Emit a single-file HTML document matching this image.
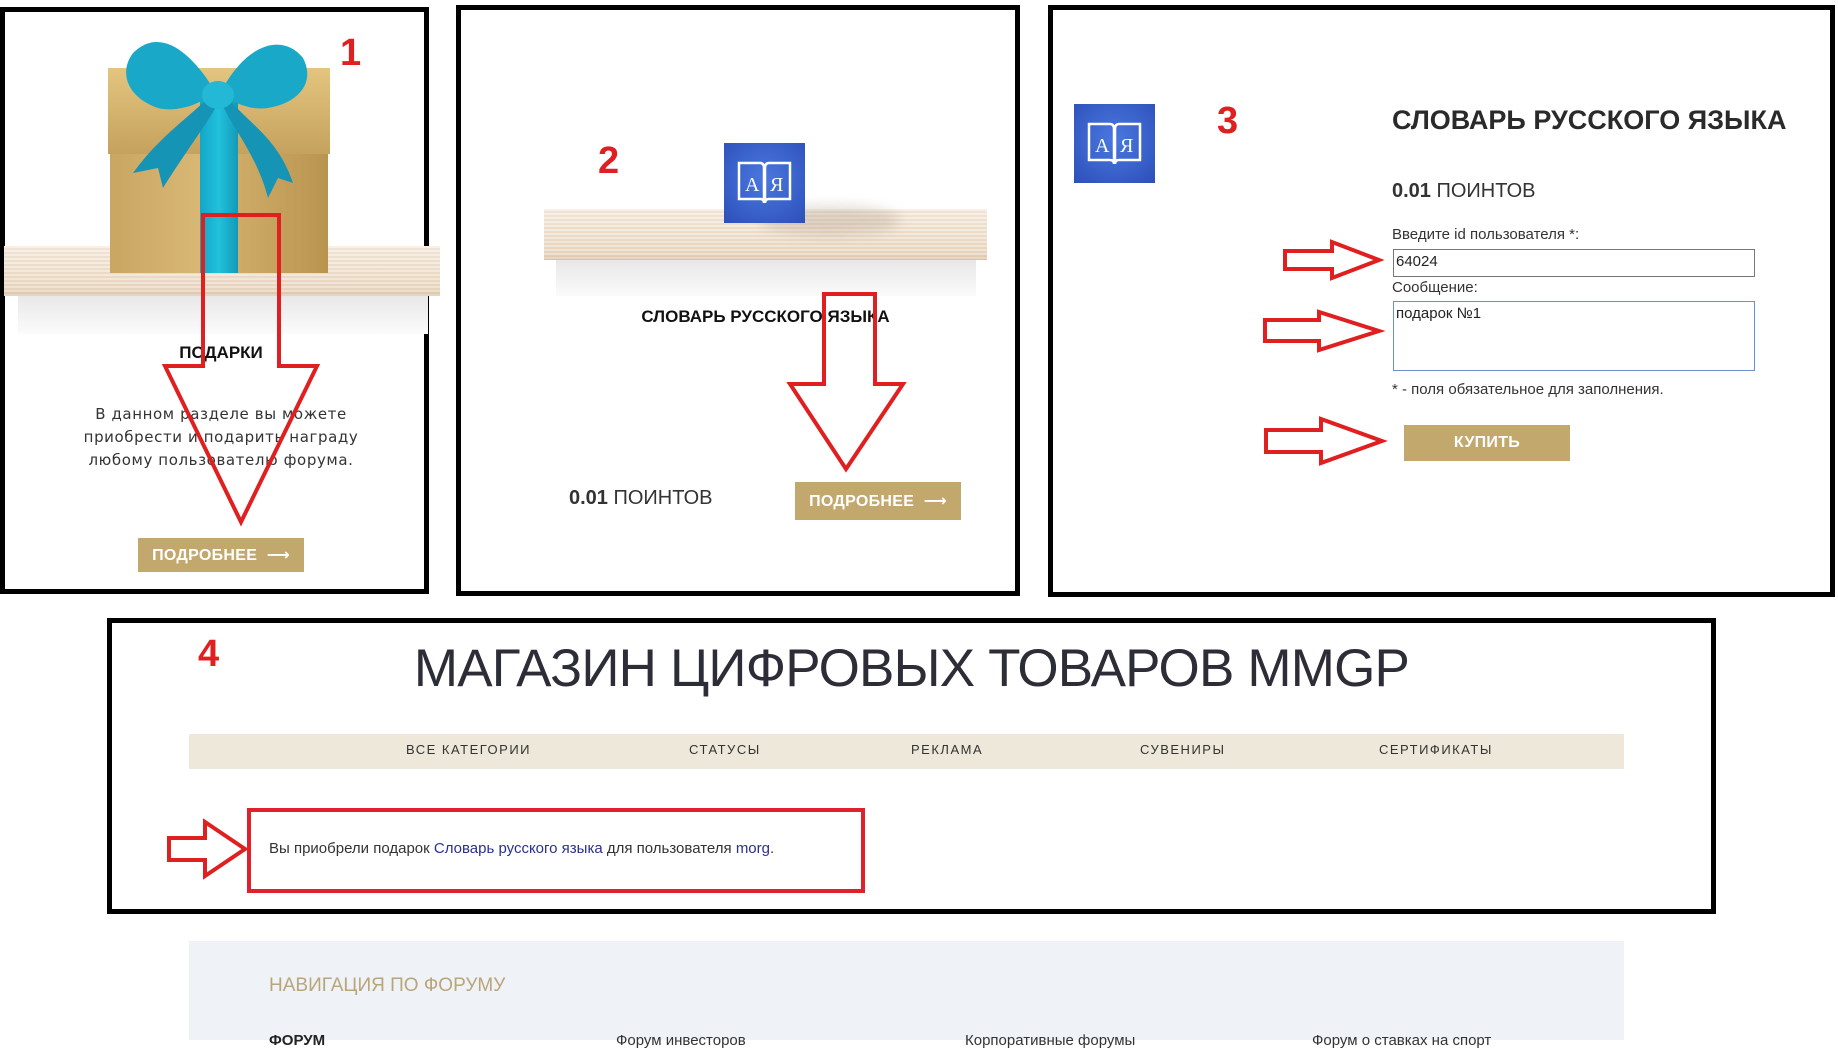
<!DOCTYPE html>
<html><head><meta charset="utf-8"><style>
*{margin:0;padding:0;box-sizing:border-box}
body{width:1838px;height:1040px;background:#fff;position:relative;overflow:hidden;font-family:"Liberation Sans","DejaVu Sans",sans-serif;color:#222}
.a{position:absolute}
.box{position:absolute;border:5px solid #000}
.btn{position:absolute;background:#c2a86c;color:#fff;font-weight:bold;font-size:16px;display:flex;align-items:center;justify-content:center;letter-spacing:.3px}
.num{position:absolute;color:#e02020;font-weight:bold;font-size:38px;font-family:"Liberation Sans",sans-serif}
.shelf{position:absolute;background:repeating-linear-gradient(180deg,rgba(255,255,255,.25) 0 2px,rgba(200,170,140,.12) 2px 4px),linear-gradient(180deg,#f6ece0 0%,#f0e2d0 50%,#ead8c3 88%,#d9c4a8 100%)}
.shadow{position:absolute;background:linear-gradient(180deg,#e6e6e6,#fbfbfb)}
.icon{position:absolute;background:radial-gradient(circle at 50% 45%,#4a78e0,#2c50b8);}
.pts{position:absolute;font-size:20px;color:#333}
.pts b{font-weight:bold}
.nav span{position:absolute;top:742px;font-size:13px;letter-spacing:1.5px;color:#333}
</style></head><body>

<!-- Box 1 -->
<div class="box" style="left:0;top:7px;width:429px;height:587px"></div>
<div class="shadow" style="left:18px;top:292px;width:410px;height:42px"></div>
<div class="shelf" style="left:4px;top:246px;width:436px;height:50px"></div>
<div class="a" style="left:110px;top:153px;width:218px;height:120px;background:linear-gradient(90deg,#c9a763,#d8b673 40%,#b8944f)"></div>
<div class="a" style="left:108px;top:68px;width:222px;height:86px;background:linear-gradient(180deg,#e3c57f,#d1b06c 60%,#c5a25e)"></div>
<div class="a" style="left:200px;top:100px;width:38px;height:173px;background:linear-gradient(90deg,#13a7c8,#22c0dc 50%,#139ab8)"></div>
<svg class="a" style="left:118px;top:28px" width="200" height="170" viewBox="0 0 200 170">
<path d="M95 60 C70 20 40 0 15 25 C0 45 10 70 40 80 C60 85 85 75 95 65Z" fill="#1aa8c9"/>
<path d="M105 60 C130 15 165 5 185 30 C198 55 180 75 150 80 C130 83 110 72 105 65Z" fill="#1aa8c9"/>
<path d="M90 70 C70 90 40 110 15 145 L40 140 L45 160 C70 120 90 95 100 75Z" fill="#1594b6"/>
<path d="M110 70 C130 95 160 110 175 155 L160 150 L150 170 C140 130 115 100 105 78Z" fill="#1594b6"/>
<ellipse cx="100" cy="67" rx="16" ry="14" fill="#22b8d6"/>
</svg>
<div class="num" style="left:340px;top:32px">1</div>
<div class="a" style="left:0;width:442px;top:343px;text-align:center;font-weight:bold;font-size:17px;color:#111">ПОДАРКИ</div>
<div class="a" style="left:0;width:442px;top:403px;text-align:center;font-size:15px;line-height:23px;color:#333;letter-spacing:.6px;font-family:'DejaVu Sans',sans-serif">В данном разделе вы можете<br>приобрести и подарить награду<br>любому пользователю форума.</div>
<div class="btn" style="left:138px;top:538px;width:166px;height:34px">ПОДРОБНЕЕ&nbsp;&nbsp;⟶</div>

<!-- Box 2 -->
<div class="box" style="left:456px;top:5px;width:564px;height:591px"></div>
<div class="shadow" style="left:556px;top:258px;width:420px;height:38px"></div>
<div class="shelf" style="left:544px;top:209px;width:443px;height:51px"></div>
<div class="a" style="left:760px;top:205px;width:140px;height:30px;border-radius:50%;background:rgba(150,130,110,.25);filter:blur(6px)"></div>
<div class="icon" style="left:724px;top:143px;width:81px;height:80px"></div>
<svg class="a" style="left:736px;top:160px" width="57" height="46" viewBox="0 0 57 46"><path d="M3 3 H24 Q28 3 28 8 V43 Q28 39 24 39 H3Z M54 3 H33 Q29 3 29 8 V43 Q29 39 33 39 H54Z" fill="none" stroke="#fff" stroke-width="2.5"/><text x="9" y="31" fill="#fff" font-family="Liberation Serif" font-size="20">А</text><text x="34" y="31" fill="#fff" font-family="Liberation Serif" font-size="20">Я</text></svg>
<div class="num" style="left:598px;top:140px">2</div>
<div class="a" style="left:544px;width:443px;top:307px;text-align:center;font-weight:bold;font-size:17px;color:#111">СЛОВАРЬ РУССКОГО ЯЗЫКА</div>
<div class="pts" style="left:569px;top:487px"><b>0.01</b> ПОИНТОВ</div>
<div class="btn" style="left:795px;top:482px;width:166px;height:38px">ПОДРОБНЕЕ&nbsp;&nbsp;⟶</div>

<!-- Box 3 -->
<div class="box" style="left:1048px;top:5px;width:787px;height:592px"></div>
<div class="icon" style="left:1074px;top:104px;width:81px;height:79px"></div>
<svg class="a" style="left:1086px;top:121px" width="57" height="46" viewBox="0 0 57 46"><path d="M3 3 H24 Q28 3 28 8 V43 Q28 39 24 39 H3Z M54 3 H33 Q29 3 29 8 V43 Q29 39 33 39 H54Z" fill="none" stroke="#fff" stroke-width="2.5"/><text x="9" y="31" fill="#fff" font-family="Liberation Serif" font-size="20">А</text><text x="34" y="31" fill="#fff" font-family="Liberation Serif" font-size="20">Я</text></svg>
<div class="num" style="left:1217px;top:100px">3</div>
<div class="a" style="left:1392px;top:105px;font-size:27px;font-weight:bold;color:#2a2a2a">СЛОВАРЬ РУССКОГО ЯЗЫКА</div>
<div class="pts" style="left:1392px;top:180px"><b>0.01</b> ПОИНТОВ</div>
<div class="a" style="left:1392px;top:226px;font-size:15px;color:#333">Введите id пользователя *:</div>
<div class="a" style="left:1393px;top:249px;width:362px;height:28px;border:1px solid #777;font-size:15px;padding:3px 2px;color:#222">64024</div>
<div class="a" style="left:1392px;top:279px;font-size:15px;color:#333">Сообщение:</div>
<div class="a" style="left:1393px;top:301px;width:362px;height:70px;border:1px solid #6d8fd0;font-size:15px;padding:3px 2px;color:#222">подарок №1</div>
<div class="a" style="left:1392px;top:381px;font-size:15px;color:#333">* - поля обязательное для заполнения.</div>
<div class="btn" style="left:1404px;top:425px;width:166px;height:36px">КУПИТЬ</div>

<!-- Box 4 -->
<div class="box" style="left:107px;top:618px;width:1609px;height:296px"></div>
<div class="num" style="left:198px;top:633px">4</div>
<div class="a" style="left:108px;width:1607px;top:638px;text-align:center;font-size:53px;color:#2d2d38;letter-spacing:-.8px">МАГАЗИН ЦИФРОВЫХ ТОВАРОВ MMGP</div>
<div class="a" style="left:189px;top:734px;width:1435px;height:35px;background:#ede8d9"></div>
<div class="nav"><span style="left:406px">ВСЕ КАТЕГОРИИ</span><span style="left:689px">СТАТУСЫ</span><span style="left:911px">РЕКЛАМА</span><span style="left:1140px">СУВЕНИРЫ</span><span style="left:1379px">СЕРТИФИКАТЫ</span></div>
<div class="a" style="left:247px;top:808px;width:618px;height:85px;border:4px solid #e0202a"></div>
<div class="a" style="left:269px;top:840px;font-size:15px;color:#333">Вы приобрели подарок <span style="color:#2a2f8f">Словарь русского языка</span> для пользователя <span style="color:#2a2f8f">morg</span>.</div>

<!-- footer -->
<div class="a" style="left:189px;top:941px;width:1435px;height:99px;background:#eff3f7"></div>
<div class="a" style="left:269px;top:975px;font-size:19px;color:#b9a57a">НАВИГАЦИЯ ПО ФОРУМУ</div>
<div class="a" style="left:269px;top:1032px;font-size:15px;font-weight:bold;color:#222">ФОРУМ</div>
<div class="a" style="left:616px;top:1032px;font-size:15px;color:#333">Форум инвесторов</div>
<div class="a" style="left:965px;top:1032px;font-size:15px;color:#333">Корпоративные форумы</div>
<div class="a" style="left:1312px;top:1032px;font-size:15px;color:#333">Форум о ставках на спорт</div>

<!-- red arrows -->
<svg class="a" style="left:0;top:0" width="1838" height="1040" viewBox="0 0 1838 1040">
<g fill="none" stroke="#e02020" stroke-width="4" stroke-linejoin="miter">
<polygon points="203,215 279,215 279,366 317,366 241,522 165,366 203,366"/>
<polygon points="824,294 875,294 875,384 903,384 846,469 790,384 824,384"/>
<polygon points="1285,251 1332,251 1332,242 1379,260 1332,278 1332,269 1285,269"/>
<polygon points="1265,320 1319,320 1319,312 1379,331 1319,350 1319,341 1265,341"/>
<polygon points="1266,430 1321,430 1321,419 1382,441 1321,463 1321,452 1266,452"/>
<polygon points="169,838 205,838 205,822 245,849 205,876 205,860 169,860"/>
</g>
</svg>
</body></html>
